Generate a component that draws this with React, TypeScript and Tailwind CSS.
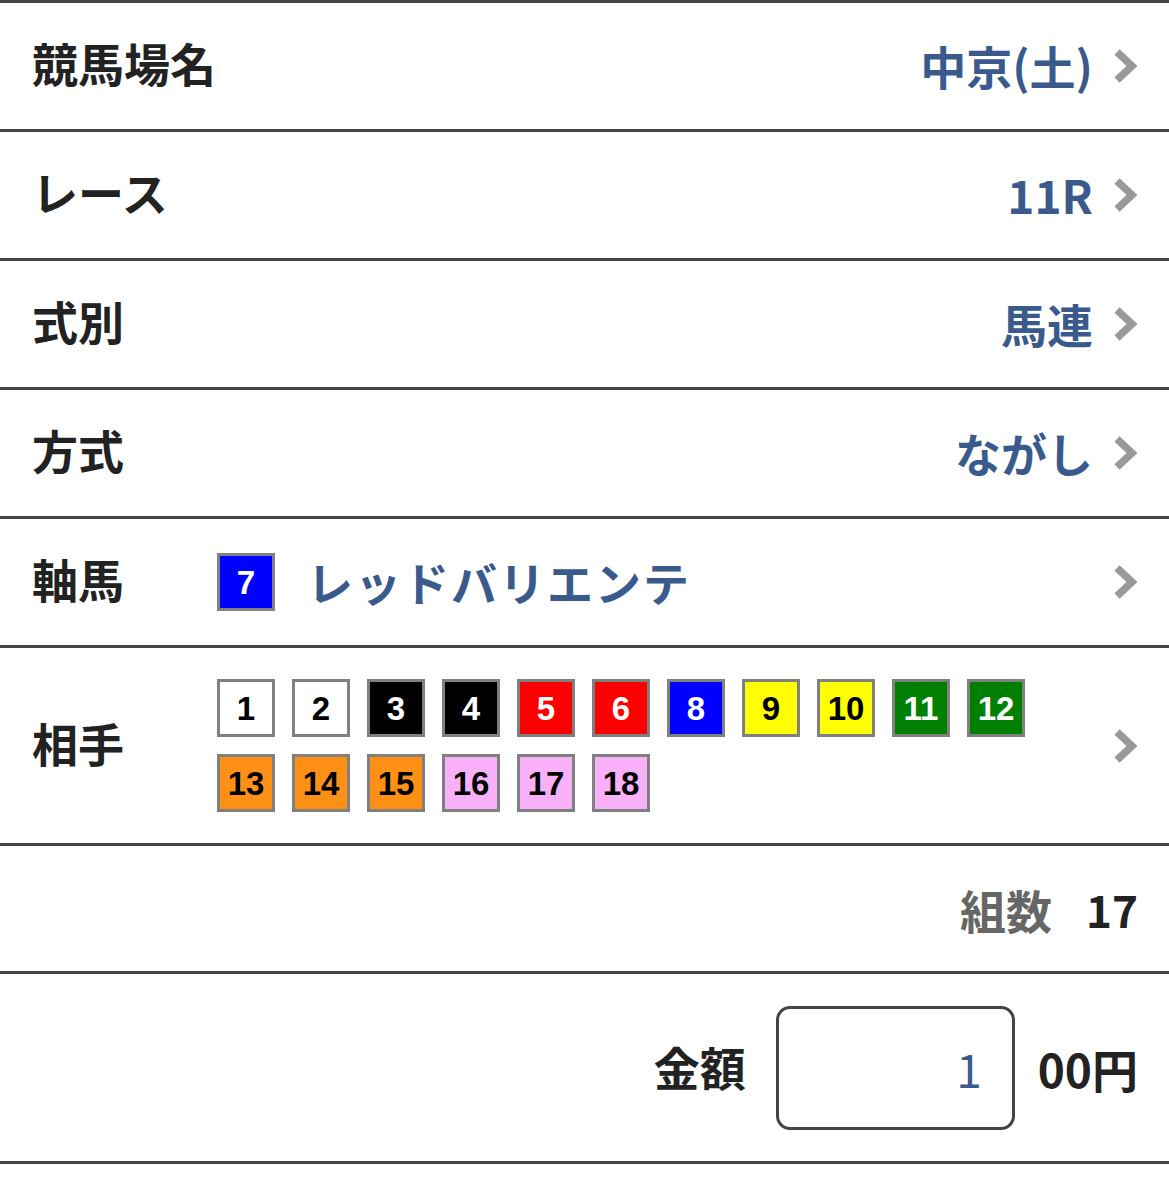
import React from 'react';

const jp = { fontFamily: '"Noto Sans CJK JP", "Noto Sans", sans-serif' };

const frameColors: Record<number, string> = {
  1: 'bg-white text-black',
  2: 'bg-white text-black',
  3: 'bg-black text-white',
  4: 'bg-black text-white',
  5: 'bg-[#ff0000] text-white',
  6: 'bg-[#ff0000] text-white',
  7: 'bg-[#0000ff] text-white',
  8: 'bg-[#0000ff] text-white',
  9: 'bg-[#ffff00] text-black',
  10: 'bg-[#ffff00] text-black',
  11: 'bg-[#008000] text-white',
  12: 'bg-[#008000] text-white',
  13: 'bg-[#ff9016] text-black',
  14: 'bg-[#ff9016] text-black',
  15: 'bg-[#ff9016] text-black',
  16: 'bg-[#f8b0f8] text-black',
  17: 'bg-[#f8b0f8] text-black',
  18: 'bg-[#f8b0f8] text-black',
};

const aite = [1, 2, 3, 4, 5, 6, 8, 9, 10, 11, 12, 13, 14, 15, 16, 17, 18];

function Chevron() {
  return (
    <svg width="25" height="36" viewBox="0 0 25 36" className="shrink-0">
      <path d="M4 4 L19 18 L4 32" fill="none" stroke="#999999" strokeWidth="7.5" strokeLinejoin="miter" />
    </svg>
  );
}

function Num({ n }: { n: number }) {
  return (
    <div
      className={`w-[58px] h-[58px] border-[3px] border-[#808080] flex items-center justify-center text-[33px] font-bold leading-none ${frameColors[n]}`}
      style={{ fontFamily: '"Liberation Sans", Arial, sans-serif' }}
    >
      {n}
    </div>
  );
}

function SelectRow({ label, value }: { label: string; value: string }) {
  return (
    <div className="h-[129px] flex items-center border-b-[3px] border-[#444] pl-[32px] pr-[31px]">
      <div className="mb-[8px] text-[46px] font-bold text-[#222] leading-none">{label}</div>
      <div className="ml-auto flex items-center gap-[20px]">
        <span className="mb-[2px] text-[46px] font-bold text-[#3a5a8c] leading-none">{value}</span>
        <Chevron />
      </div>
    </div>
  );
}

export default function App() {
  return (
    <div className="w-[1169px] min-h-[1193px] bg-white" style={jp}>
      <div className="border-t-[3px] border-[#444]">
        <SelectRow label="競馬場名" value="中京(土)" />
        <SelectRow label="レース" value="11R" />
        <SelectRow label="式別" value="馬連" />
        <SelectRow label="方式" value="ながし" />

        {/* 軸馬 */}
        <div className="h-[129px] flex items-center border-b-[3px] border-[#444] pl-[32px] pr-[31px]">
          <div className="mb-[8px] w-[185px] text-[46px] font-bold text-[#222] leading-none">軸馬</div>
          <Num n={7} />
          <span className="ml-[32px] mb-[2px] text-[46px] font-bold tracking-[2px] text-[#3a5a8c] leading-none">
            レッドバリエンテ
          </span>
          <div className="ml-auto">
            <Chevron />
          </div>
        </div>

        {/* 相手 */}
        <div className="h-[198px] flex items-center border-b-[3px] border-[#444] pl-[32px] pr-[31px]">
          <div className="mb-[8px] w-[185px] text-[46px] font-bold text-[#222] leading-none">相手</div>
          <div className="w-[830px] flex flex-wrap gap-[17px]">
            {aite.map((n) => (
              <Num key={n} n={n} />
            ))}
          </div>
          <div className="ml-auto">
            <Chevron />
          </div>
        </div>

        {/* 組数 */}
        <div className="h-[128px] flex items-center justify-end border-b-[3px] border-[#444] pl-[32px] pr-[31px]">
          <span className="text-[46px] font-bold text-[#666] leading-none">組数</span>
          <span className="ml-[34px] text-[44px] font-bold text-[#222] leading-none">17</span>
        </div>

        {/* 金額 */}
        <div className="h-[190px] flex items-center justify-end border-b-[3px] border-[#444] pl-[32px] pr-[31px]">
          <span className="mb-[4px] text-[46px] font-bold text-[#222] leading-none">金額</span>
          <div className="ml-[30px] w-[239px] h-[124px] border-[3px] border-[#444] rounded-[14px] flex items-center justify-end pr-[30px]">
            <span className="text-[46px] text-[#3a5a8c] leading-none">1</span>
          </div>
          <span className="ml-[23px] text-[46px] font-bold text-[#222] leading-none">00円</span>
        </div>
      </div>
    </div>
  );
}
